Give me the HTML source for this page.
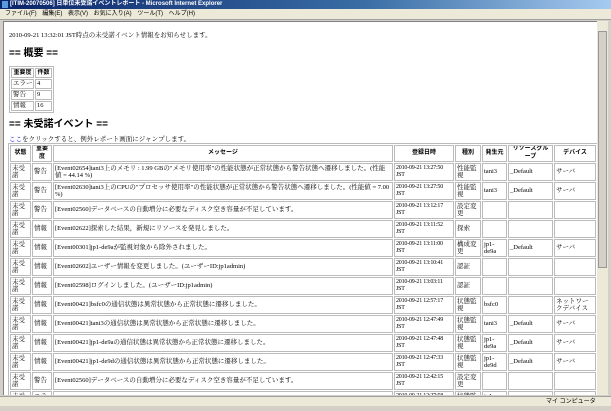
<!DOCTYPE html>
<html><head><meta charset="utf-8"><style>
*{margin:0;padding:0;box-sizing:border-box}
body{width:611px;height:411px;overflow:hidden;background:#d4d0c8;font-family:"Liberation Serif","Noto Serif CJK SC","Noto Sans CJK JP",serif;font-size:6.5px;color:#000;position:relative}
.title{position:absolute;left:0;top:0;width:611px;height:9px;background:linear-gradient(90deg,#0a246a,#3a6ea5 60%,#a6caf0);color:#fff;font:bold 6px "Liberation Sans","Noto Sans CJK JP",sans-serif;line-height:9px;padding-left:10px;white-space:nowrap}
.title i{position:absolute;left:2px;top:1px;width:6px;height:7px;background:#5a9be0}
.menu{position:absolute;left:0;top:9px;width:611px;height:11px;background:#ece9d8;font:6px "Liberation Sans","Noto Sans CJK JP",sans-serif;line-height:11px;padding-left:5px;word-spacing:4px;border-bottom:1px solid #a0a0a0}
.content{position:absolute;left:3px;top:21px;width:594px;height:374px;background:#fff;overflow:hidden;border-left:1px solid #808080;border-top:1px solid #808080}
.sb{position:absolute;left:597px;top:21px;width:11px;height:374px;background:#ece9d8}
.sb .th{position:absolute;left:1px;top:10px;width:9px;height:237px;background:#d4d0c8;border:1px solid #999}
.status{position:absolute;left:0;top:396px;width:611px;height:10px;background:#ece9d8;font:6px "Liberation Sans","Noto Sans CJK JP",sans-serif;line-height:10px;border-top:1px solid #a0a0a0}
.status span{position:absolute;left:546px}
p.t{position:absolute;left:5px;top:8px;white-space:nowrap}
h2{position:absolute;font:bold 10px "Liberation Sans","Noto Sans CJK JP",sans-serif;white-space:nowrap}
table{border-collapse:separate;border-spacing:1px;border:1px solid #bbb;position:absolute;table-layout:fixed}
td,th{border:1px solid #bbb;padding:0 1px;vertical-align:middle;overflow:hidden;line-height:7.5px;font-weight:normal}
th{font-family:"Liberation Sans","Noto Sans CJK JP",sans-serif;font-weight:bold;text-align:center;font-size:6px}
.s td,.s th{height:10px;white-space:nowrap;line-height:8px}
.m tr{height:18px}
.m td{height:18px;max-height:18px}
.m td:nth-child(4){font-size:6px;letter-spacing:-0.2px}
a{color:#00c}
</style></head><body>
<div class="title"><i></i>[ITIM-20070506] 日単位未受諾イベントレポート - Microsoft Internet Explorer</div>
<div class="menu">ファイル(F) 編集(E) 表示(V) お気に入り(A) ツール(T) ヘルプ(H)</div>
<div class="content">
<p class="t">2010-09-21 13:32:01 JST時点の未受諾イベント情報をお知らせします。</p>
<h2 style="left:5px;top:22px">== 概要 ==</h2>
<table class="s" style="left:5px;top:44px;width:45px">
<colgroup><col style="width:23px"><col></colgroup>
<tr><th>重要度</th><th>件数</th></tr>
<tr><td>エラー</td><td>4</td></tr>
<tr><td>警告</td><td>9</td></tr>
<tr><td>情報</td><td>16</td></tr>
</table>
<h2 style="left:5px;top:93px">== 未受諾イベント ==</h2>
<p style="position:absolute;left:5px;top:112px;white-space:nowrap"><a>ここ</a>をクリックすると、例外レポート画面にジャンプします。</p>
<table class="m" style="left:4px;top:121px;width:590px">
<colgroup><col style="width:21px"><col style="width:20px"><col style="width:340px"><col style="width:60px"><col style="width:26px"><col style="width:25px"><col style="width:45px"><col></colgroup>
<tr style="height:17px"><th>状態</th><th>重要度</th><th>メッセージ</th><th>登録日時</th><th>種別</th><th>発生元</th><th>リソースグループ</th><th>デバイス</th></tr>
<tr><td>未受諾</td><td>警告</td><td>[Event02654]tani3上のメモリ : 1.99 GBの"メモリ使用率"の性能状態が正常状態から警告状態へ遷移しました。(性能値 = 44.14 %)</td><td>2010-09-21 13:27:50 JST</td><td>性能監視</td><td>tani3</td><td>_Default</td><td>サーバ</td></tr>
<tr><td>未受諾</td><td>警告</td><td>[Event02630]tani3上のCPUの"プロセッサ使用率"の性能状態が正常状態から警告状態へ遷移しました。(性能値 = 7.00 %)</td><td>2010-09-21 13:27:50 JST</td><td>性能監視</td><td>tani3</td><td>_Default</td><td>サーバ</td></tr>
<tr><td>未受諾</td><td>警告</td><td>[Event02560]データベースの自動増分に必要なディスク空き容量が不足しています。</td><td>2010-09-21 13:12:17 JST</td><td>設定変更</td><td></td><td></td><td></td></tr>
<tr><td>未受諾</td><td>情報</td><td>[Event02622]探索した結果，新規にリソースを発見しました。</td><td>2010-09-21 13:11:52 JST</td><td>探索</td><td></td><td></td><td></td></tr>
<tr><td>未受諾</td><td>情報</td><td>[Event00301]jp1-de9aが監視対象から除外されました。</td><td>2010-09-21 13:11:00 JST</td><td>構成変更</td><td>jp1-de9a</td><td>_Default</td><td>サーバ</td></tr>
<tr><td>未受諾</td><td>情報</td><td>[Event02602]ユーザー情報を変更しました。(ユーザーID:jp1admin)</td><td>2010-09-21 13:10:41 JST</td><td>認証</td><td></td><td></td><td></td></tr>
<tr><td>未受諾</td><td>情報</td><td>[Event02598]ログインしました。(ユーザーID:jp1admin)</td><td>2010-09-21 13:03:11 JST</td><td>認証</td><td></td><td></td><td></td></tr>
<tr><td>未受諾</td><td>情報</td><td>[Event00421]bsfc0の通信状態は異常状態から正常状態に遷移しました。</td><td>2010-09-21 12:57:17 JST</td><td>状態監視</td><td>bsfc0</td><td></td><td>ネットワークデバイス</td></tr>
<tr><td>未受諾</td><td>情報</td><td>[Event00421]tani3の通信状態は異常状態から正常状態に遷移しました。</td><td>2010-09-21 12:47:49 JST</td><td>状態監視</td><td>tani3</td><td>_Default</td><td>サーバ</td></tr>
<tr><td>未受諾</td><td>情報</td><td>[Event00421]jp1-de9aの通信状態は異常状態から正常状態に遷移しました。</td><td>2010-09-21 12:47:48 JST</td><td>状態監視</td><td>jp1-de9a</td><td>_Default</td><td>サーバ</td></tr>
<tr><td>未受諾</td><td>情報</td><td>[Event00421]jp1-de9dの通信状態は異常状態から正常状態に遷移しました。</td><td>2010-09-21 12:47:33 JST</td><td>状態監視</td><td>jp1-de9d</td><td>_Default</td><td>サーバ</td></tr>
<tr><td>未受諾</td><td>警告</td><td>[Event02560]データベースの自動増分に必要なディスク空き容量が不足しています。</td><td>2010-09-21 12:42:15 JST</td><td>設定変更</td><td></td><td></td><td></td></tr>
<tr><td>未受諾</td><td>エラー</td><td>[Event00410]jp1-de9aは接続に失敗しました。</td><td>2010-09-21 12:27:58 JST</td><td>状態監視</td><td>jp1-de9a</td><td>_Default</td><td>サーバ</td></tr>
</table>
</div>
<div class="sb"><div class="th"></div></div>
<div class="status"><span>マイ コンピュータ</span></div>
</body></html>
